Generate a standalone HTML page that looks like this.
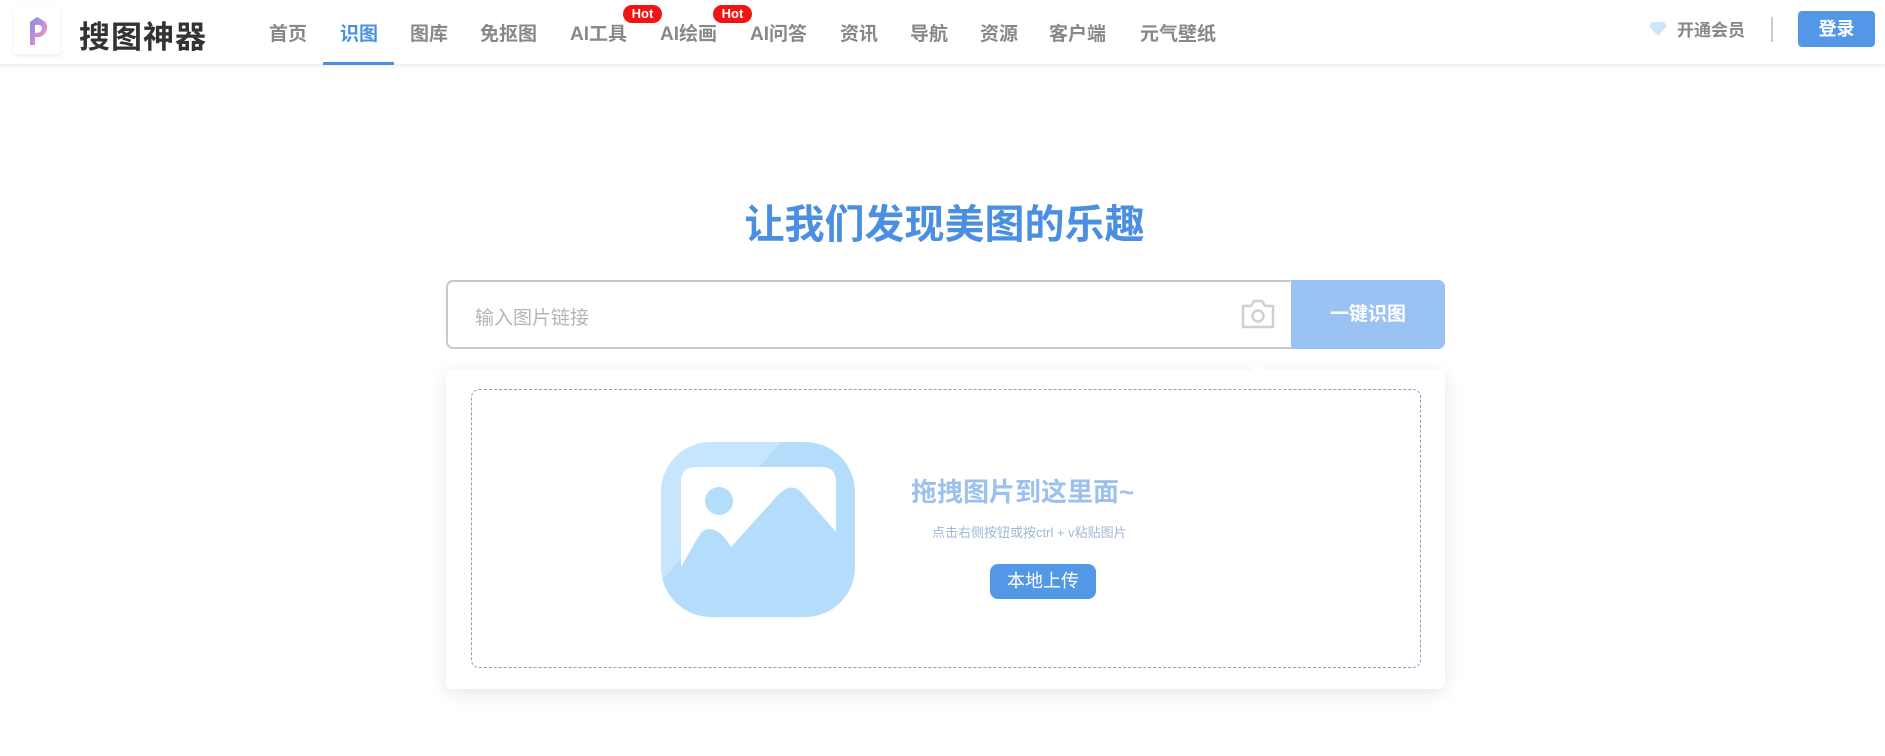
<!DOCTYPE html>
<html><head><meta charset="utf-8"><style>
*{margin:0;padding:0;box-sizing:border-box}
body{width:1885px;height:756px;background:#fff;font-family:"Liberation Sans","Noto Sans CJK SC",sans-serif;position:relative;overflow:hidden}
.hdr{position:absolute;left:0;top:0;width:1885px;height:65px;background:#fff;box-shadow:0 2px 4px rgba(0,0,0,.06);border-bottom:1px solid #f0f0f0}
.logo{position:absolute;left:14px;top:8px;width:46px;height:46px;background:#fff;box-shadow:0 2px 6px rgba(0,0,0,.08);border-radius:3px}
.brand{position:absolute;left:79px;top:12px;font-size:31px;font-weight:bold;color:#333;letter-spacing:1px}
.nav{position:absolute;top:19px;font-size:19px;font-weight:bold;color:#888}
.hot{position:absolute;top:5px;width:39px;height:18px;background:#f01414;border-radius:9px;color:#fff;font-size:13px;font-weight:bold;text-align:center;line-height:18px}
.ul{position:absolute;left:323px;top:62px;width:71px;height:3px;background:#4a90e2}
.title{position:absolute;left:2px;width:1885px;top:192px;text-align:center;font-size:40px;font-weight:bold;color:#4a8fe2}
.search{position:absolute;left:446px;top:280px;width:999px;height:69px;border:2px solid #c8c9cc;border-radius:7px;background:#fff}
.ph{position:absolute;left:27px;top:21px;font-size:19px;color:#b5b5b5}
.btn{position:absolute;left:1291px;top:280px;width:154px;height:69px;background:#9ac2f3;border-radius:0 7px 7px 0;color:#fff;font-size:19px;font-weight:bold;text-align:center;line-height:69px}
.panel{position:absolute;left:446px;top:370px;width:999px;height:319px;background:#fff;border-radius:6px;box-shadow:0 4px 18px rgba(0,0,0,.1)}
.arrow{position:absolute;left:1249px;top:362px;width:0;height:0;border-left:9px solid transparent;border-right:9px solid transparent;border-bottom:9px solid #fff}
.dash{position:absolute;left:471px;top:389px;width:950px;height:279px;border:1px dashed #7fa3c9;border-radius:8px}
</style></head><body>
<div class="hdr">
<div class="logo"><svg width="46" height="46" viewBox="0 0 46 46"><defs><linearGradient id="lg" x1="0" y1="0" x2="1" y2="1"><stop offset="0" stop-color="#7a8fe0"/><stop offset=".5" stop-color="#c48fd8"/><stop offset="1" stop-color="#f5a0a0"/></linearGradient></defs><path d="M16 14 L23 9 L30 13 Q35 17 32 24 Q29 30 21 29 L21 37 L16 37 Z M21 17 L21 25 Q28 25 28 20 Q27 16 21 17 Z" fill="url(#lg)"/></svg></div>
<div class="brand">搜图神器</div>
<div class="nav" style="left:269px">首页</div>
<div class="nav" style="left:340px;color:#4a90e2">识图</div>
<div class="nav" style="left:410px">图库</div>
<div class="nav" style="left:480px">免抠图</div>
<div class="nav" style="left:570px">AI工具</div>
<div class="nav" style="left:660px">AI绘画</div>
<div class="nav" style="left:750px">AI问答</div>
<div class="nav" style="left:840px">资讯</div>
<div class="nav" style="left:910px">导航</div>
<div class="nav" style="left:980px">资源</div>
<div class="nav" style="left:1049px">客户端</div>
<div class="nav" style="left:1140px">元气壁纸</div>
<div class="hot" style="left:623px">Hot</div>
<div class="hot" style="left:713px">Hot</div>
<div class="ul"></div>
<svg style="position:absolute;left:1648px;top:21px" width="20" height="16" viewBox="0 0 20 16"><path d="M4 1H16L19 5L10 15L1 5Z" fill="#cfe6f7"/></svg>
<div class="nav" style="left:1677px;font-size:17px;top:16px">开通会员</div>
<div style="position:absolute;left:1771px;top:17px;width:2px;height:25px;background:#ccc"></div>
<div style="position:absolute;left:1798px;top:11px;width:77px;height:36px;background:#5398e6;border-radius:4px;color:#fff;font-size:18px;font-weight:bold;text-align:center;line-height:36px">登录</div>
</div>
<div class="title">让我们发现美图的乐趣</div>
<div class="search"><div class="ph">输入图片链接</div>
<svg style="position:absolute;left:792px;top:16px" width="36" height="32" viewBox="0 0 36 32"><path d="M3 8H11L14 3H22L25 8H33V29H3Z" fill="none" stroke="#d0d0d0" stroke-width="2.5" stroke-linejoin="round"/><circle cx="18" cy="18" r="5.5" fill="none" stroke="#d0d0d0" stroke-width="2.5"/></svg></div>
<div class="btn">一键识图</div>
<div class="panel"></div>
<div class="arrow"></div>
<div class="dash"></div>
<svg style="position:absolute;left:661px;top:442px" width="194" height="175" viewBox="0 0 194 175"><defs><clipPath id="c"><rect width="194" height="175" rx="50"/></clipPath></defs><rect width="194" height="175" rx="50" fill="#b4dcfb"/><g clip-path="url(#c)"><path d="M0 0H120L0 140Z" fill="#cfe8fd" opacity=".7"/></g><path d="M20 125V40Q20 25 35 25H160Q175 25 175 40V90L140 50Q130 40 118 52L70 105Q55 80 40 90Z" fill="#fff"/><circle cx="58" cy="59" r="14" fill="#b4dcfb"/></svg>
<div style="position:absolute;left:911px;top:472px;font-size:26px;font-weight:bold;color:#9dc1ee">拖拽图片到这里面~</div>
<div style="position:absolute;left:932px;top:522px;font-size:13px;color:#9fb8d8">点击右侧按钮或按ctrl + v粘贴图片</div>
<div style="position:absolute;left:990px;top:564px;width:106px;height:35px;background:#5398e6;border-radius:8px;color:#fff;font-size:18px;text-align:center;line-height:35px">本地上传</div>
</body></html>
